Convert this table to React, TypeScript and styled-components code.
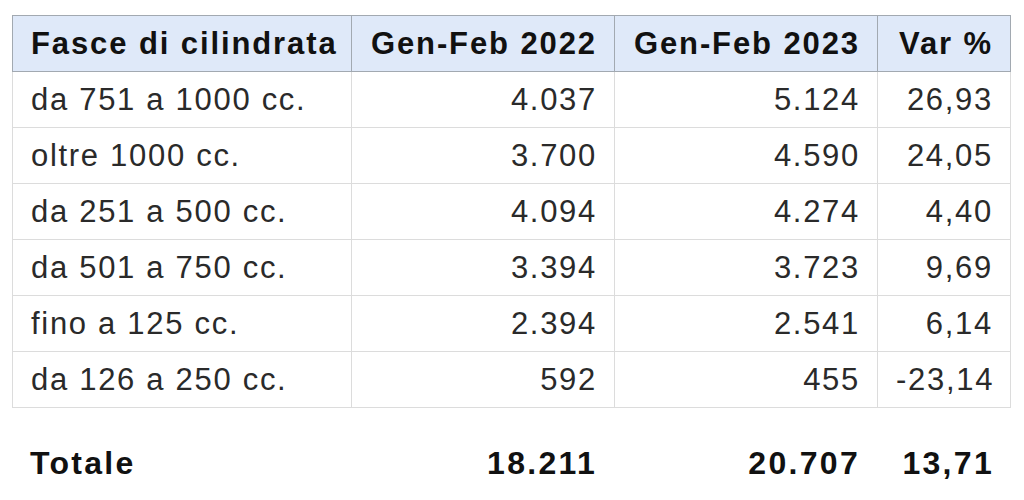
import styled, { createGlobalStyle } from "styled-components";

type Row = {
   label: string;
   y2022: string;
   y2023: string;
   varPct: string;
};

const rows: Row[] = [
   { label: "da 751 a 1000 cc.", y2022: "4.037", y2023: "5.124", varPct: "26,93" },
   { label: "oltre 1000 cc.", y2022: "3.700", y2023: "4.590", varPct: "24,05" },
   { label: "da 251 a 500 cc.", y2022: "4.094", y2023: "4.274", varPct: "4,40" },
   { label: "da 501 a 750 cc.", y2022: "3.394", y2023: "3.723", varPct: "9,69" },
   { label: "fino a 125 cc.", y2022: "2.394", y2023: "2.541", varPct: "6,14" },
   { label: "da 126 a 250 cc.", y2022: "592", y2023: "455", varPct: "-23,14" },
];

const GlobalStyle = createGlobalStyle`
   body {
      margin: 0;
      background: #fff;
      font-family: "Liberation Sans", Arial, sans-serif;
   }
`;

export default function App() {
   return (
      <>
         <GlobalStyle />
         <PageStyle>
            <TableStyle>
               <colgroup>
                  <col style={{ width: 339 }} />
                  <col style={{ width: 263 }} />
                  <col style={{ width: 263 }} />
                  <col style={{ width: 133 }} />
               </colgroup>
               <thead>
                  <tr>
                     <HeadCell $align="left">Fasce di cilindrata</HeadCell>
                     <HeadCell>Gen-Feb 2022</HeadCell>
                     <HeadCell>Gen-Feb 2023</HeadCell>
                     <HeadCell>Var %</HeadCell>
                  </tr>
               </thead>
               <tbody>
                  {rows.map((r) => (
                     <BodyRow key={r.label}>
                        <BodyCell $align="left">{r.label}</BodyCell>
                        <BodyCell>{r.y2022}</BodyCell>
                        <BodyCell>{r.y2023}</BodyCell>
                        <BodyCell>{r.varPct}</BodyCell>
                     </BodyRow>
                  ))}
               </tbody>
            </TableStyle>
            <TotalRow>
               <TotalCell $align="left">Totale</TotalCell>
               <TotalCell>18.211</TotalCell>
               <TotalCell>20.707</TotalCell>
               <TotalCell>13,71</TotalCell>
            </TotalRow>
         </PageStyle>
      </>
   );
}

const PageStyle = styled.div`
   padding: 15px 0 0 12px;
   width: 999px;
`;

const TableStyle = styled.table`
   border-collapse: collapse;
   table-layout: fixed;
   width: 999px;
   font-size: 31px;
   letter-spacing: 1.7px;
`;

const HeadCell = styled.th<{ $align?: "left" | "right" }>`
   height: 55px;
   padding: 0 17px 0 18px;
   background: #dfe9f9;
   border: 1px solid #a2a9b1;
   color: #111;
   font-weight: bold;
   text-align: ${(p) => p.$align ?? "right"};
   white-space: nowrap;
   letter-spacing: 1.9px;
`;

const BodyRow = styled.tr`
   height: 56px;
`;

const BodyCell = styled.td<{ $align?: "left" | "right" }>`
   padding: 0 17px 0 18px;
   border: 1px solid #dcdcdc;
   color: #2a2a2a;
   text-align: ${(p) => p.$align ?? "right"};
   white-space: nowrap;
`;

const TotalRow = styled.div`
   display: grid;
   grid-template-columns: 339px 263px 263px 134px;
   align-items: center;
   height: 56px;
   margin-top: 27px;
`;

const TotalCell = styled.div<{ $align?: "left" | "right" }>`
   padding: 0 17px 0 18px;
   font-size: 32px;
   font-weight: bold;
   letter-spacing: 2.3px;
   color: #111;
   text-align: ${(p) => p.$align ?? "right"};
   white-space: nowrap;
`;
